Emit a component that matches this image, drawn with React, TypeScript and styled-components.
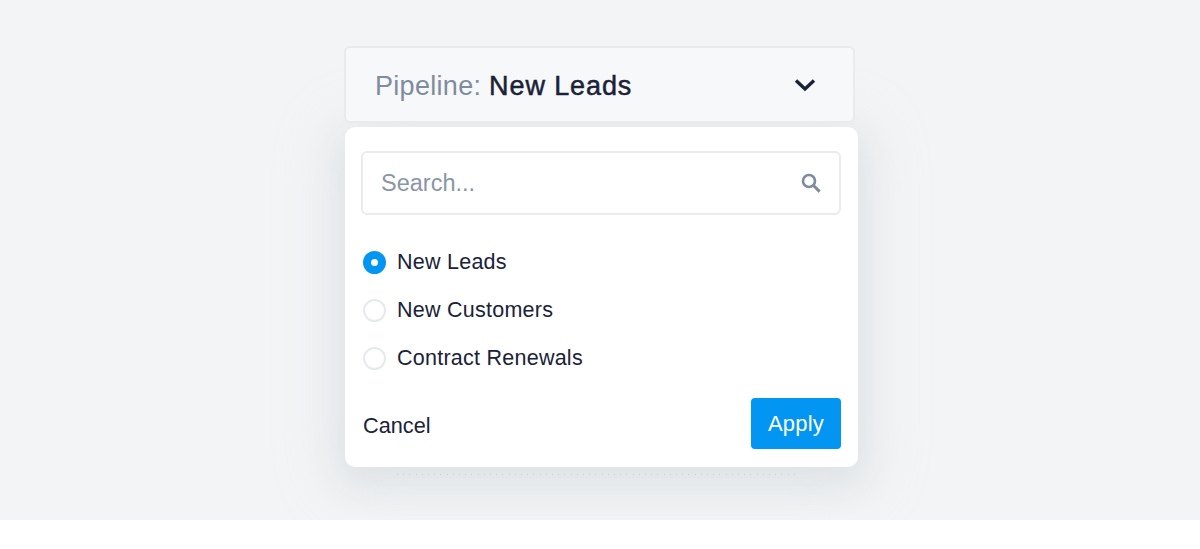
import React from 'react'
import styled, { createGlobalStyle } from 'styled-components'

const GlobalStyle = createGlobalStyle`
  html, body {
    margin: 0;
    padding: 0;
    background: #ffffff;
    overflow: hidden;
  }
  body {
    font-family: "Liberation Sans", Arial, sans-serif;
    color: #1a2238;
    -webkit-font-smoothing: antialiased;
  }
`

const Stage = styled.div`
  height: 520px;
  box-sizing: border-box;
  padding: 46px 0 0 344px;
  background: #f3f4f6;
`

const Column = styled.div`
  width: 514px;
  display: flex;
  flex-direction: column;
  gap: 4px;
`

const Trigger = styled.div`
  position: relative;
  z-index: 1;
  width: 511px;
  height: 77px;
  box-sizing: border-box;
  display: flex;
  align-items: center;
  justify-content: space-between;
  padding: 0 37px 0 29px;
  background: #f7f8f9;
  border: 2px solid #e8ebee;
  border-radius: 6px;
  font-size: 27px;
`

const TriggerText = styled.span`
  padding-top: 4px;
`

const TriggerLabel = styled.span`
  color: #7f8b9e;
  letter-spacing: 0.3px;
`

const TriggerValue = styled.span`
  color: #1a2238;
  -webkit-text-stroke: 0.5px #1a2238;
  letter-spacing: 0.9px;
`

const Panel = styled.div`
  position: relative;
  margin-left: 1px;
  width: 513px;
  height: 340px;
  box-sizing: border-box;
  padding: 24px 17px 18px 16px;
  display: flex;
  flex-direction: column;
  background: #ffffff;
  border-radius: 10px;
  box-shadow: 0 12px 30px 6px rgba(208, 214, 218, 0.42), 0 10px 60px 12px rgba(208, 214, 218, 0.28);
`

const SearchBox = styled.div`
  height: 64px;
  box-sizing: border-box;
  display: flex;
  align-items: center;
  justify-content: space-between;
  padding: 0 18px 0 18px;
  border: 2px solid #e8ebef;
  border-radius: 6px;
  font-size: 23.5px;
  color: #8a95a8;
`

const RadioList = styled.div`
  margin-top: 35px;
  display: flex;
  flex-direction: column;
  gap: 24px;
`

const RadioRow = styled.div`
  height: 24px;
  display: flex;
  align-items: center;
  gap: 11px;
  padding-left: 2px;
  font-size: 21.5px;
  letter-spacing: 0.25px;
  color: #1a2238;
`

const RadioDot = styled.span<{ $checked?: boolean }>`
  width: 23px;
  height: 23px;
  box-sizing: border-box;
  flex: none;
  display: flex;
  align-items: center;
  justify-content: center;
  border-radius: 50%;
  background: ${p => (p.$checked ? '#0295f2' : '#ffffff')};
  border: ${p => (p.$checked ? 'none' : '2px solid #e6e9ed')};

  &::after {
    content: '';
    display: ${p => (p.$checked ? 'block' : 'none')};
    width: 7px;
    height: 7px;
    border-radius: 50%;
    background: #ffffff;
  }
`

const Footer = styled.div`
  margin-top: auto;
  display: flex;
  align-items: center;
  justify-content: space-between;
  padding-left: 2px;
`

const CancelLink = styled.span`
  font-size: 21.7px;
  padding-top: 5px;
  color: #1a2238;
`

const ApplyButton = styled.div`
  width: 90px;
  height: 51px;
  display: flex;
  align-items: center;
  justify-content: center;
  background: #0295f2;
  border-radius: 4px;
  color: #ffffff;
  font-size: 22px;
  letter-spacing: 0.2px;
`

const DottedEdge = styled.div`
  position: absolute;
  left: 52px;
  top: 347px;
  width: 403px;
  height: 1px;
  background: repeating-linear-gradient(to right, #c8ced4 0 1px, transparent 1px 6.2px);
`

const options = [
  { label: 'New Leads', checked: true },
  { label: 'New Customers' },
  { label: 'Contract Renewals' },
]

export default function App() {
  return (
    <>
      <GlobalStyle />
      <Stage>
        <Column>
          <Trigger>
            <TriggerText>
              <TriggerLabel>Pipeline: </TriggerLabel>
              <TriggerValue>New Leads</TriggerValue>
            </TriggerText>
            <svg width="22" height="14" viewBox="0 0 22 14" fill="none">
              <path d="M2 2.5 L11 11 L20 2.5" stroke="#1a2238" strokeWidth="3.4" />
            </svg>
          </Trigger>
          <Panel>
            <SearchBox>
              <span>Search...</span>
              <svg width="20" height="20" viewBox="0 0 20 20" fill="none">
                <circle cx="8" cy="8" r="6" stroke="#7f8b9e" strokeWidth="2.6" />
                <path d="M12.5 12.5 L18.6 18.6" stroke="#7f8b9e" strokeWidth="3" />
              </svg>
            </SearchBox>
            <RadioList>
              {options.map(o => (
                <RadioRow key={o.label}>
                  <RadioDot $checked={o.checked} />
                  {o.label}
                </RadioRow>
              ))}
            </RadioList>
            <Footer>
              <CancelLink>Cancel</CancelLink>
              <ApplyButton>Apply</ApplyButton>
            </Footer>
            <DottedEdge />
          </Panel>
        </Column>
      </Stage>
    </>
  )
}
